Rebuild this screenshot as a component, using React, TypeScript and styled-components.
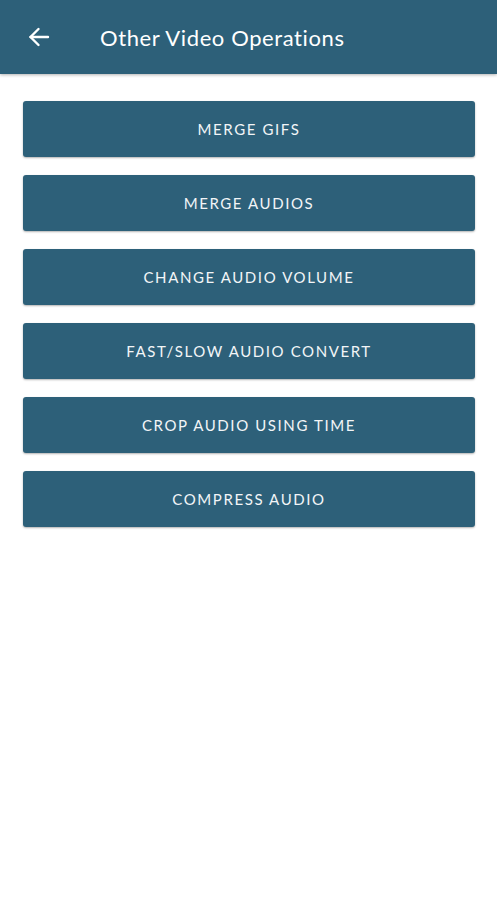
import styled, { createGlobalStyle } from 'styled-components';

const GlobalStyle = createGlobalStyle`
	html, body {
		margin: 0;
		padding: 0;
		background: #ffffff;
		font-family: 'Lato', 'Noto Sans', sans-serif;
	}
`;

const Page = styled.div`
	display: flex;
	flex-direction: column;
	width: 100%;
	min-height: 900px;
	background: #ffffff;
`;

const Toolbar = styled.header`
	display: flex;
	flex-direction: row;
	align-items: center;
	height: 74px;
	padding-left: 26px;
	background: #2d6079;
	box-shadow: 0 1px 3px rgba(0, 0, 0, 0.3);
	box-sizing: border-box;
`;

const BackButton = styled.button`
	display: flex;
	align-items: center;
	justify-content: center;
	width: 26px;
	height: 26px;
	padding: 0;
	border: none;
	background: none;
	cursor: pointer;
`;

const Title = styled.h1`
	margin: 0 0 0 48px;
	color: #ffffff;
	font-size: 22px;
	font-weight: 400;
	letter-spacing: 0.6px;
`;

const List = styled.div`
	display: flex;
	flex-direction: column;
	gap: 18px;
	padding: 27px 22px 0 23px;
`;

const ActionButton = styled.button`
	display: flex;
	align-items: center;
	justify-content: center;
	height: 56px;
	border: none;
	border-radius: 3px;
	background: #2d6079;
	box-shadow: 0 1px 2px rgba(0, 0, 0, 0.3);
	color: #f2f5f7;
	font-family: 'Lato', 'Noto Sans', sans-serif;
	font-size: 15px;
	font-weight: 400;
	letter-spacing: 1.6px;
	text-transform: uppercase;
	cursor: pointer;
`;

const actions = [
	'Merge GIFs',
	'Merge Audios',
	'Change Audio Volume',
	'Fast/Slow Audio Convert',
	'Crop Audio Using Time',
	'Compress Audio',
];

const App = () => (
	<Page>
		<GlobalStyle />
		<Toolbar>
			<BackButton aria-label='back'>
				<svg width='24' height='24' viewBox='0 0 24 24' fill='none' stroke='#ffffff' strokeWidth='2.4' strokeLinecap='round' strokeLinejoin='round'>
					<path d='M21 12H3.5' />
					<path d='M11.5 4L3.5 12L11.5 20' />
				</svg>
			</BackButton>
			<Title>Other Video Operations</Title>
		</Toolbar>
		<List>
			{actions.map((label) => (
				<ActionButton key={label}>{label}</ActionButton>
			))}
		</List>
	</Page>
);

export default App;
